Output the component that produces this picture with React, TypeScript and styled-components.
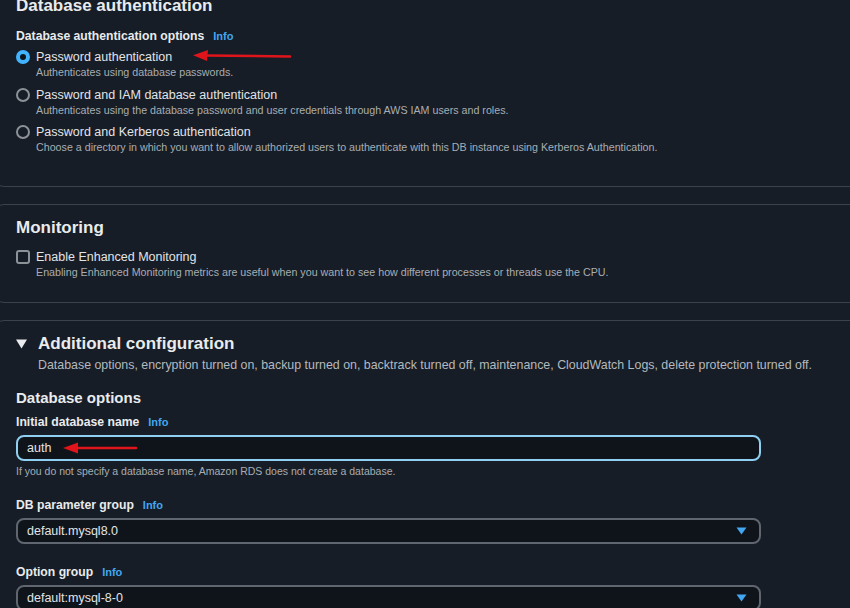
import React from "react";
import styled, { createGlobalStyle } from "styled-components";

const Global = createGlobalStyle`
  html, body { margin: 0; padding: 0; background: #161d26; overflow: hidden; }
  body { font-family: "Liberation Sans", Arial, sans-serif; color: #e9ebed; }
`;

const Page = styled.div`
  display: flex;
  flex-direction: column;
  gap: 17px;
  margin: -26px -30px 0 -12px;
`;

const Card = styled.section<{ $padTop: number; $padBottom: number }>`
  border: 1px solid #3b424c;
  border-radius: 16px;
  background: #161d26;
  padding: ${(p) => p.$padTop}px 20px ${(p) => p.$padBottom}px 27px;
  display: flex;
  flex-direction: column;
`;

const H2 = styled.h2`
  margin: 0;
  font-size: 17px;
  line-height: 24px;
  font-weight: 700;
  color: #e9ebed;
`;

const H3 = styled.h3`
  margin: 15px 0 0;
  font-size: 15px;
  line-height: 20px;
  font-weight: 700;
  color: #e9ebed;
`;

const Label = styled.div<{ $mt: number }>`
  margin-top: ${(p) => p.$mt}px;
  display: flex;
  align-items: center;
  gap: 9px;
  font-size: 12.2px;
  line-height: 16px;
  font-weight: 700;
  color: #e9ebed;
`;

const Info = styled.span`
  font-size: 11px;
  font-weight: 700;
  color: #42a6f0;
`;

const OptionRow = styled.div<{ $mt: number }>`
  margin-top: ${(p) => p.$mt}px;
  display: grid;
  grid-template-columns: 14px 1fr;
  column-gap: 6px;
  align-items: center;
`;

const OptionLabel = styled.div`
  font-size: 12.5px;
  line-height: 16px;
  color: #e2e4e7;
`;

const OptionDesc = styled.div`
  grid-column: 2;
  font-size: 10.7px;
  line-height: 15px;
  color: #a8adb3;
`;

const Radio = styled.span<{ $checked?: boolean }>`
  box-sizing: border-box;
  width: 14px;
  height: 14px;
  border-radius: 50%;
  border: ${(p) => (p.$checked ? "4px solid #42b4ff" : "2px solid #8d9198")};
  background: ${(p) => (p.$checked ? "#0f141a" : "transparent")};
`;

const Checkbox = styled.span`
  box-sizing: border-box;
  width: 14px;
  height: 14px;
  border-radius: 3px;
  border: 2px solid #8d9198;
`;

const ExpandHeader = styled.div`
  display: flex;
  align-items: center;
  gap: 11px;
`;

const Caret = styled.svg`
  width: 11px;
  height: 10px;
  flex: none;
`;

const HeaderDesc = styled.div`
  margin: 1px 0 0 22px;
  font-size: 12.4px;
  line-height: 16px;
  color: #b4b9bf;
`;

const Field = styled.div<{ $focus?: boolean }>`
  box-sizing: border-box;
  margin-top: 5px;
  width: 745px;
  height: 26px;
  border-radius: 8px;
  border: ${(p) => (p.$focus ? "2px solid #8fd0f2" : "2px solid #5f6670")};
  background: #0f141a;
  display: flex;
  align-items: center;
  justify-content: space-between;
  padding: 0 12px 0 9px;
  font-size: 12.5px;
  color: #e2e4e7;
`;

const Helper = styled.div`
  margin-top: 3px;
  font-size: 10.5px;
  line-height: 14px;
  color: #a8adb3;
`;

const Arrow = styled.svg`
  position: absolute;
  pointer-events: none;
`;

const SelectCaret = () => (
  <svg width="11" height="8" viewBox="0 0 11 8">
    <path d="M0.5 0.5 H10.5 L5.5 7.5 Z" fill="#42a6f0" />
  </svg>
);

export default function App() {
  return (
    <>
      <Global />
      <Page>
        <Card $padTop={19} $padBottom={31}>
          <H2>Database authentication</H2>
          <Label $mt={10}>
            Database authentication options <Info>Info</Info>
          </Label>
          <OptionRow $mt={5}>
            <Radio $checked />
            <OptionLabel>Password authentication</OptionLabel>
            <OptionDesc>Authenticates using database passwords.</OptionDesc>
          </OptionRow>
          <OptionRow $mt={7}>
            <Radio />
            <OptionLabel>Password and IAM database authentication</OptionLabel>
            <OptionDesc>
              Authenticates using the database password and user credentials through AWS IAM users and roles.
            </OptionDesc>
          </OptionRow>
          <OptionRow $mt={6}>
            <Radio />
            <OptionLabel>Password and Kerberos authentication</OptionLabel>
            <OptionDesc>
              Choose a directory in which you want to allow authorized users to authenticate with this DB instance
              using Kerberos Authentication.
            </OptionDesc>
          </OptionRow>
        </Card>

        <Card $padTop={11} $padBottom={22}>
          <H2>Monitoring</H2>
          <OptionRow $mt={9}>
            <Checkbox />
            <OptionLabel>Enable Enhanced Monitoring</OptionLabel>
            <OptionDesc>
              Enabling Enhanced Monitoring metrics are useful when you want to see how different processes or threads
              use the CPU.
            </OptionDesc>
          </OptionRow>
        </Card>

        <Card $padTop={11} $padBottom={40}>
          <ExpandHeader>
            <Caret viewBox="0 0 11 10">
              <path d="M0 0.5 H11 L5.5 9.5 Z" fill="#e9ebed" />
            </Caret>
            <H2>Additional configuration</H2>
          </ExpandHeader>
          <HeaderDesc>
            Database options, encryption turned on, backup turned on, backtrack turned off, maintenance, CloudWatch Logs,
            delete protection turned off.
          </HeaderDesc>
          <H3>Database options</H3>
          <Label $mt={6}>
            Initial database name <Info>Info</Info>
          </Label>
          <Field $focus>auth</Field>
          <Helper>If you do not specify a database name, Amazon RDS does not create a database.</Helper>
          <Label $mt={19}>
            DB parameter group <Info>Info</Info>
          </Label>
          <Field>
            default.mysql8.0
            <SelectCaret />
          </Field>
          <Label $mt={20}>
            Option group <Info>Info</Info>
          </Label>
          <Field>
            default:mysql-8-0
            <SelectCaret />
          </Field>
        </Card>
      </Page>

      <Arrow width="110" height="14" viewBox="0 0 110 14" style={{ left: 188, top: 48 }}>
        <path d="M18 7.5 L102 8.5" stroke="#e0141b" strokeWidth="2.5" strokeLinecap="round" />
        <path d="M5 7.3 L20 2 L19 13 Z" fill="#e0141b" />
      </Arrow>
      <Arrow width="85" height="14" viewBox="0 0 85 14" style={{ left: 58, top: 441 }}>
        <path d="M18 7 L78 7" stroke="#e0141b" strokeWidth="2.5" strokeLinecap="round" />
        <path d="M5 7 L20 1.5 L20 12.5 Z" fill="#e0141b" />
      </Arrow>
    </>
  );
}
